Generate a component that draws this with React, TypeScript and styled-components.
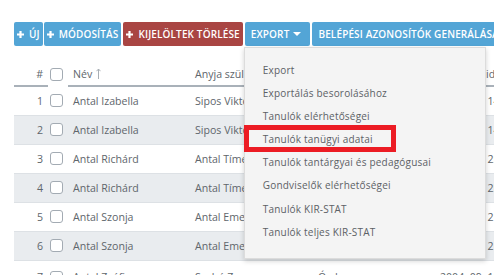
import styled, { createGlobalStyle } from "styled-components";

const GlobalStyle = createGlobalStyle`
  body {
    margin: 0;
    background: #fff;
    font-family: "Open Sans", "Liberation Sans", sans-serif;
    overflow: hidden;
  }
`

const Page = styled.div`
  width: 494px;
  height: 275px;
  overflow: hidden;
  padding: 22px 0 0 14px;
  box-sizing: border-box;
`

const Toolbar = styled.div`
  display: flex;
  gap: 2px;
  height: 24px;
  white-space: nowrap;
`

const Button = styled.div<{ $danger?: boolean; $pad?: string }>`
  position: relative;
  display: flex;
  align-items: center;
  gap: 5px;
  flex: 0 0 auto;
  height: 24px;
  padding: ${p => p.$pad || "0 3px 0 3px"};
  box-sizing: border-box;
  border-radius: 2px;
  background: ${p => (p.$danger ? "#a94543" : "#53a5d6")};
  color: #fff;
  font-size: 10px;
  font-weight: 600;
  letter-spacing: 0.13px;
  text-transform: uppercase;
`

const Caret = styled.span`
  width: 0;
  height: 0;
  margin-left: -1px;
  border-left: 4px solid transparent;
  border-right: 4px solid transparent;
  border-top: 4px solid #fff;
`

const Menu = styled.div`
  position: absolute;
  top: 25px;
  left: -1px;
  width: 240px;
  padding: 11px 0 14px;
  background: #f4f4f4;
  border: 1px solid #dcdcdc;
  box-shadow: 0 2px 5px rgba(0, 0, 0, 0.18);
  z-index: 10;
`

const MenuItem = styled.div<{ $marked?: boolean }>`
  position: relative;
  height: 23.1px;
  line-height: 23px;
  padding-left: 18px;
  font-size: 10px;
  font-weight: 400;
  color: #5c6166;
  text-transform: none;
  letter-spacing: 0.2px;

  ${p => p.$marked && `
    &::after {
      content: "";
      position: absolute;
      left: -1px;
      top: -3px;
      width: 152px;
      height: 27px;
      box-sizing: border-box;
      border: 5px solid #ec1c24;
    }
  `}
`

const Table = styled.table`
  margin-top: 16px;
  border-collapse: collapse;
  table-layout: fixed;
  width: 560px;
  font-size: 10.6px;
  color: #60666c;
  white-space: nowrap;
`

const HeadCell = styled.th<{ $right?: boolean }>`
  height: 23px;
  padding: 0 5px;
  font-weight: 400;
  text-align: ${p => (p.$right ? "right" : "left")};
  border-bottom: 2px solid #a9b1b9;
  overflow: hidden;
`

const Row = styled.tr<{ $striped?: boolean; $tall?: boolean }>`
  height: ${p => (p.$tall ? "34px" : "29px")};
  background: ${p => (p.$striped ? "#e9ecef" : "#fff")};
  border-bottom: 1px solid #dde1e5;
`

const Cell = styled.td<{ $right?: boolean }>`
  padding: 0 5px;
  text-align: ${p => (p.$right ? "right" : "left")};
  overflow: hidden;
`

const CheckCell = styled.td`
  padding: 0 0 0 2px;
`

const Check = styled.span`
  display: block;
  width: 13px;
  height: 13px;
  box-sizing: border-box;
  border: 1px solid #a3abb3;
  border-radius: 3px;
  background: #fff;
`

const SortIcon = styled.svg`
  margin-left: 4px;
  vertical-align: -1px;
`

const Plus = () => (
  <svg width="7" height="7" viewBox="0 0 7 7">
    <path d="M3.5 0v7M0 3.5h7" stroke="#fff" strokeWidth="2.2" />
  </svg>
)

const rows = [
  ["Antal Izabella", "Sipos Viktória", "Budapest", "2004. 10. 14."],
  ["Antal Izabella", "Sipos Viktória", "Budapest", "2004. 10. 14."],
  ["Antal Richárd", "Antal Tímea", "Miskolc", "2004. 11. 25."],
  ["Antal Richárd", "Antal Tímea", "Miskolc", "2004. 11. 25."],
  ["Antal Szonja", "Antal Emese", "Eger", "2004. 12. 21."],
  ["Antal Szonja", "Antal Emese", "Eger", "2004. 12. 21."],
  ["Antal Zsófia", "Szabó Zsuzsa", "Ózd", "2004. 09. 15."],
]

const menu = [
  "Export",
  "Exportálás besorolásához",
  "Tanulók elérhetőségei",
  "Tanulók tanügyi adatai",
  "Tanulók tantárgyai és pedagógusai",
  "Gondviselők elérhetőségei",
  "Tanulók KIR-STAT",
  "Tanulók teljes KIR-STAT",
]

const App = () => {
  return (
    <Page>
      <GlobalStyle />
      <Toolbar>
        <Button style={{ marginRight: -1 }}><Plus />Új</Button>
        <Button><Plus />Módosítás</Button>
        <Button $danger><Plus />Kijelöltek törlése</Button>
        <Button $pad="0 9px 0 6px">
          Export <Caret />
          <Menu>
            {menu.map((m, i) => (
              <MenuItem key={m} $marked={i === 3}>{m}</MenuItem>
            ))}
          </Menu>
        </Button>
        <Button $pad="0 6px">Belépési azonosítók generálása</Button>
      </Toolbar>

      <Table>
        <colgroup>
          <col style={{ width: 34 }} />
          <col style={{ width: 20 }} />
          <col style={{ width: 122 }} />
          <col style={{ width: 123 }} />
          <col style={{ width: 122 }} />
          <col />
        </colgroup>
        <thead>
          <tr>
            <HeadCell $right>#</HeadCell>
            <CheckCell as="th"><Check /></CheckCell>
            <HeadCell>
              Név
              <SortIcon width="5" height="11" viewBox="0 0 5 11">
                <path d="M2.5 1v10M0.5 3.2L2.5 1l2 2.2" stroke="#a9afb5" strokeWidth="1" fill="none" />
              </SortIcon>
            </HeadCell>
            <HeadCell>Anyja születési neve</HeadCell>
            <HeadCell>Születési hely</HeadCell>
            <HeadCell>Születési idő</HeadCell>
          </tr>
        </thead>
        <tbody>
          {rows.map((r, i) => (
            <Row key={i} $striped={i % 2 === 1} $tall={i === rows.length - 1}>
              <Cell $right>{i + 1}</Cell>
              <CheckCell><Check /></CheckCell>
              <Cell>{r[0]}</Cell>
              <Cell>{r[1]}</Cell>
              <Cell>{r[2]}</Cell>
              <Cell>{r[3]}</Cell>
            </Row>
          ))}
        </tbody>
      </Table>
    </Page>
  )
}

export default App;
